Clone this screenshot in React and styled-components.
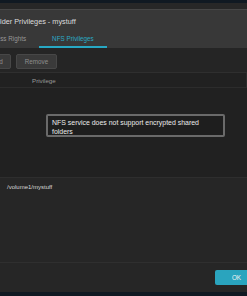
import React from "react";
import styled, { createGlobalStyle } from "styled-components";

const Global = createGlobalStyle`
  html, body { margin: 0; padding: 0; background: #101922; overflow: hidden; }
  body { width: 247px; height: 296px; font-family: "Liberation Sans", Arial, sans-serif; }
`;

const Dialog = styled.div`
  margin: 3px 0 0 -30px;
  width: 290px;
  background: #272727;
  padding-top: 6px;
  display: flex;
  flex-direction: column;
`;

const Header = styled.div`
  background: #383838;
  border-top: 1px solid #474747;
  display: flex;
  flex-direction: column;
`;

const Title = styled.div`
  height: 22px;
  display: flex;
  align-items: center;
  padding-left: 21.5px;
  font-size: 7.3px;
  color: #dcdcdc;
`;

const Tabs = styled.div`
  display: flex;
  padding-left: 3.2px;
`;

const Tab = styled.div`
  height: 14px;
  line-height: 14px;
  padding: 0 13px;
  font-size: 6.3px;
  color: ${(p) => (p.$active ? "#2aa9c5" : "#979797")};
  border-bottom: 2px solid ${(p) => (p.$active ? "#27a8c4" : "transparent")};
`;

const Toolbar = styled.div`
  height: 25px;
  background: #252525;
  border-bottom: 1px solid #2f2f2f;
  display: flex;
  align-items: flex-start;
  gap: 5px;
  padding: 6px 0 0 13px;
  box-sizing: border-box;
`;

const Button = styled.div`
  height: 15px;
  box-sizing: border-box;
  padding: 0 7.5px;
  display: flex;
  align-items: center;
  background: #3a3a3a;
  border: 1px solid #474747;
  border-radius: 2px;
  color: #8e8e8e;
  font-size: 6.3px;
`;

const GridHeader = styled.div`
  height: 14px;
  background: #212121;
  border-bottom: 1px solid #2c2c2c;
  display: grid;
  grid-template-columns: 58px 1fr 14px;
  font-size: 6.2px;
  color: #9a9a9a;
`;

const HeaderCell = styled.div`
  display: flex;
  align-items: center;
  padding-left: 4px;
  border-left: ${(p) => (p.$divider ? "1px solid #2c2c2c" : "none")};
`;

const GridBody = styled.div`
  position: relative;
  height: 89px;
  background: #212121;
  border-bottom: 1px solid #2e2e2e;
`;

const Message = styled.div`
  position: absolute;
  left: 76px;
  top: 26px;
  width: 179px;
  height: 23px;
  box-sizing: border-box;
  background: #1e1e1e;
  border: 2px solid #6a6a6a;
  border-radius: 2px;
  padding: 2px 4px;
  font-size: 6.95px;
  line-height: 9px;
  color: #ececec;
`;

const Panel = styled.div`
  height: 85px;
  background: #262626;
  border-bottom: 1px solid #2f2f2f;
  padding: 6px 0 0 37px;
  box-sizing: border-box;
  font-size: 6px;
  color: #d8d8d8;
`;

const Footer = styled.div`
  height: 29px;
  background: #262626;
  display: flex;
  align-items: flex-start;
  padding: 7px 0 0 245px;
  box-sizing: border-box;
`;

const OkButton = styled.div`
  width: 43px;
  height: 15px;
  border-radius: 2px;
  background: #2aa4be;
  color: #f4f4f4;
  font-size: 6.3px;
  display: flex;
  align-items: center;
  justify-content: center;
`;

export default function App() {
  return (
    <>
      <Global />
      <Dialog>
        <Header>
          <Title>Folder Privileges - mystuff</Title>
          <Tabs>
            <Tab>Access Rights</Tab>
            <Tab $active>NFS Privileges</Tab>
          </Tabs>
        </Header>
        <Toolbar>
          <Button>Add</Button>
          <Button>Remove</Button>
        </Toolbar>
        <GridHeader>
          <HeaderCell />
          <HeaderCell>Privilege</HeaderCell>
          <HeaderCell $divider />
        </GridHeader>
        <GridBody>
          <Message>NFS service does not support encrypted shared folders</Message>
        </GridBody>
        <Panel>/volume1/mystuff</Panel>
        <Footer>
          <OkButton>OK</OkButton>
        </Footer>
      </Dialog>
    </>
  );
}
